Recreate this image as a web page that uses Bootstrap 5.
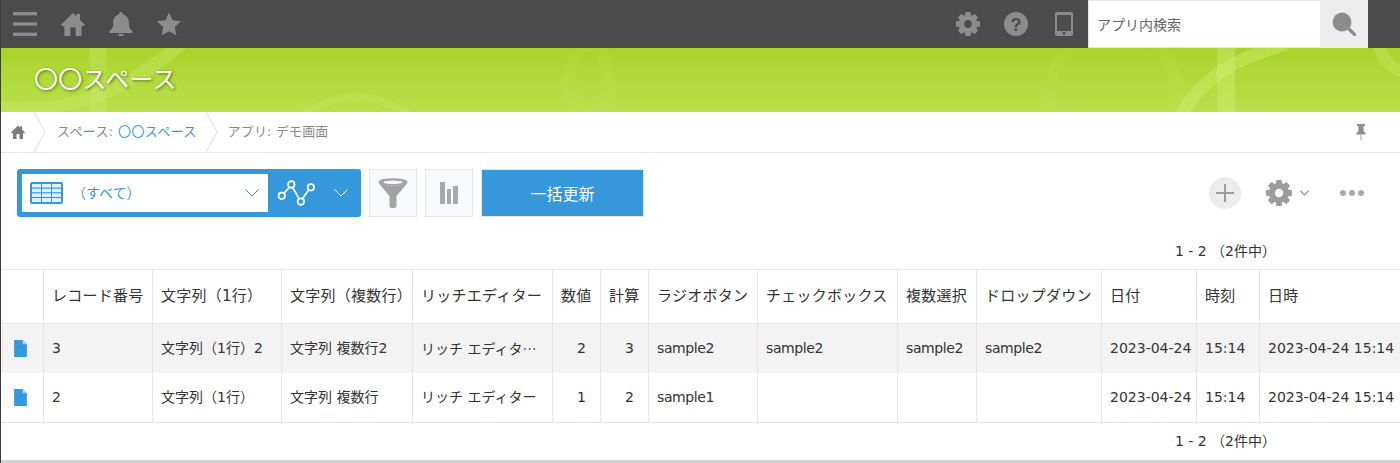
<!DOCTYPE html>
<html lang="ja">
<head>
<meta charset="utf-8">
<title>〇〇スペース</title>
<link href="https://cdn.jsdelivr.net/npm/bootstrap@5.3.0/dist/css/bootstrap.min.css" rel="stylesheet">
<style>
html,body{height:463px;overflow:hidden;background:#fff}
body{font-family:"DejaVu Sans","Noto Sans CJK JP",sans-serif;font-size:14px;color:#333;border-left:1px solid #3c3c3c}
.page-wrap{height:463px;display:flex;flex-direction:column}
.topbar{height:48px;background:#4b4b4b;padding-left:1px;margin-left:-1px;flex:none}
.topbar svg{fill:#8c8c8c;display:block}
.top-slot{width:48px;height:48px;display:flex;align-items:center;justify-content:center;flex:none}
.search-box{width:280px;height:48px;margin-right:32px;flex:none;flex-wrap:nowrap}
.search-box .form-control{height:48px;border-radius:0;border:1px solid #e3e7e8;padding:0 8px;font-size:14px;color:#666;box-shadow:none;font-family:"Noto Sans CJK JP",sans-serif}
.search-box .form-control::placeholder{color:#666;opacity:1}
.search-box .btn{width:48px;height:48px;border-radius:0;background:#ececec;border:0;padding:0;display:flex;align-items:center;justify-content:center}
.banner{height:64px;background:linear-gradient(180deg,#a9d42b 0%,#b8e04b 100%);flex:none;overflow:hidden}
.banner-art{left:0;top:0;width:1399px;height:64px}
.banner-title{font-family:"Noto Sans CJK JP",sans-serif;font-size:24px;font-weight:400;color:#fff;line-height:60px;margin:0;padding-left:33px;letter-spacing:.3px;text-shadow:1px 1px 3px rgba(60,70,0,.75)}
.crumbs{height:41px;border-bottom:1px solid #e3e7e8;font-size:13px;color:#888;flex:none}
.crumbs a{color:#3498db;text-decoration:none}
.crumbs span{letter-spacing:.35px}
.crumbs .crumb-app{letter-spacing:.15px}
.crumb-home{margin:0 9px 0 10px;fill:#7b7b7b}
.crumb-sep{margin-right:10px;flex:none}
.crumb-first{margin-left:1px;margin-right:9px}
.crumb-pin{margin-right:33px}
.tools{height:64px;padding:16px 36px 0 16px;flex:none}
.view-picker{width:344px;height:48px;background:#3498db;border-radius:3px;padding:5px;flex:none}
.view-field{width:246px;height:38px;background:#fff;color:#3498db;font-family:"Noto Sans CJK JP",sans-serif;padding:0 9px 0 8px}
.view-name{margin-left:9px;margin-top:-2px}
.line-glyph{margin-left:9px}
.tool-btn{width:48px;height:48px;background:#f7f9fa;border:1px solid #e3e7e8;border-radius:0;padding:0;display:flex;align-items:center;justify-content:center;flex:none}
.bulk-btn{width:163px;height:48px;background:#3498db;border:1px solid #e3e7e8;border-radius:0;color:#fff;font-size:16px;font-family:"Noto Sans CJK JP",sans-serif;margin-left:8px}
.bulk-btn:hover{background:#3498db;color:#fff}
.right-tools{height:48px}
.plus-circle{width:32px;height:32px;border-radius:50%;background:#ececec;display:flex;align-items:center;justify-content:center}
.gear-tool{margin-left:25px;color:#9c9c9c}
.gear-caret{margin-left:8px}
.more-dots{margin-left:31px}
.pager{height:52px;padding:16px 124px 0 0;font-size:14px;color:#333;flex:none}
.pager-foot{height:37px;padding-top:0}
.grid-table{table-layout:fixed;width:1399px;margin:0;border-collapse:separate;border-spacing:0;color:#333;--bs-table-bg:transparent}
.grid-table th,.grid-table td{padding:0 8px;border:0;border-right:1px solid #e3e7e8;white-space:nowrap;overflow:hidden;vertical-align:middle;font-weight:400;box-shadow:none}
.grid-table th:last-child,.grid-table td:last-child{border-right:0}
.grid-table thead th{height:55px;font-size:15px;letter-spacing:.25px;border-top:1px solid #e3e7e8;border-bottom:1px solid #e3e7e8}
.grid-table tbody tr:first-child td{height:49px;background:#f3f3f3}
.grid-table tbody tr:last-child td{height:50px;border-bottom:1px solid #e3e7e8}
.grid-table .num-cell{text-align:right;padding-right:14px}
.grid-table .sample-cell{letter-spacing:-.4px}
.cjk-run{font-family:"Noto Sans CJK JP",sans-serif}
.doc-icon{display:block;margin-left:5px;margin-top:-1px}
.foot-bar{height:4px;background:#d0d3d3;flex:none}
</style>
</head>
<body>
<svg width="0" height="0" class="position-absolute">
  <defs>
    <symbol id="gear" viewBox="-13 -13 26 26">
      <circle r="7.2" fill="none" stroke="currentColor" stroke-width="6"/>
      <g fill="currentColor">
        <rect x="-2.9" y="-13" width="5.8" height="6.5" rx=".8"/>
        <rect x="-2.9" y="-13" width="5.8" height="6.5" rx=".8" transform="rotate(45)"/>
        <rect x="-2.9" y="-13" width="5.8" height="6.5" rx=".8" transform="rotate(90)"/>
        <rect x="-2.9" y="-13" width="5.8" height="6.5" rx=".8" transform="rotate(135)"/>
        <rect x="-2.9" y="-13" width="5.8" height="6.5" rx=".8" transform="rotate(180)"/>
        <rect x="-2.9" y="-13" width="5.8" height="6.5" rx=".8" transform="rotate(225)"/>
        <rect x="-2.9" y="-13" width="5.8" height="6.5" rx=".8" transform="rotate(270)"/>
        <rect x="-2.9" y="-13" width="5.8" height="6.5" rx=".8" transform="rotate(315)"/>
      </g>
    </symbol>
    <symbol id="home" viewBox="0 0 24 24">
      <path d="M12 1 L15.5 4.4 V2 H19 V7.8 L24 12.8 L22.6 14 H20.6 V24 H14.6 V15.5 H9.4 V24 H3.4 V14 H1.4 L0 12.8 Z"/>
    </symbol>
    <symbol id="doc" viewBox="0 0 12 16">
      <path d="M0 0 H8 L12 4 V16 H0 Z" fill="#3498db"/>
      <path d="M8 0 L12 4 H8 Z" fill="#a9d2f0"/>
    </symbol>
  </defs>
</svg>
<div class="page-wrap">
  <nav class="topbar d-flex align-items-center">
    <div class="d-flex align-items-center">
      <div class="top-slot" aria-label="menu">
        <svg width="24" height="24" viewBox="0 0 24 24"><rect y="0" width="24" height="3.4"/><rect y="10.3" width="24" height="3.4"/><rect y="20.6" width="24" height="3.4"/></svg>
      </div>
      <div class="top-slot"><svg width="24" height="24"><use href="#home"/></svg></div>
      <div class="top-slot">
        <svg width="24" height="24" viewBox="0 0 24 24"><path d="M12 0 a2 2 0 0 1 2 2 v.6 c3.8 .9 5.8 4 5.8 8 c0 4.6 1 6.6 3.6 8.6 v1.8 H.6 v-1.8 c2.6 -2 3.6 -4 3.6 -8.6 c0 -4 2 -7.1 5.800 -8 V2 a2 2 0 0 1 2 -2z"/><path d="M9 22 h6 a3 2 0 0 1 -6 0z"/></svg>
      </div>
      <div class="top-slot">
        <svg width="24" height="24" viewBox="0 0 24 24"><path d="M12 .5 L15.6 8.2 L24 9.2 L17.8 15 L19.4 23.500 L12 19.3 L4.6 23.500 L6.2 15 L0 9.2 L8.4 8.2 Z"/></svg>
      </div>
    </div>
    <div class="d-flex align-items-center ms-auto">
      <div class="top-slot" style="color:#8c8c8c"><svg width="24" height="24"><use href="#gear"/></svg></div>
      <div class="top-slot">
        <svg width="24" height="24" viewBox="0 0 24 24"><circle cx="12" cy="12" r="12"/><text x="12" y="18.5" text-anchor="middle" font-family="Liberation Sans" font-weight="700" font-size="18" fill="#4b4b4b">?</text></svg>
      </div>
      <div class="top-slot">
        <svg width="18" height="24" viewBox="0 0 18 24"><path fill-rule="evenodd" d="M2 0 H16 a2 2 0 0 1 2 2 V22 a2 2 0 0 1 -2 2 H2 a2 2 0 0 1 -2 -2 V2 a2 2 0 0 1 2 -2z M2 3 V19 H16 V3z"/><circle cx="9" cy="21.4" r="1.3" fill="#4b4b4b"/></svg>
      </div>
      <div class="input-group search-box">
        <input class="form-control" type="text" placeholder="アプリ内検索">
        <button class="btn" type="button" aria-label="検索">
          <svg width="24" height="24" viewBox="0 0 24 24" fill="none" stroke="#8c8c8c"><circle cx="10" cy="10" r="8" stroke-width="2.8"/><path d="M15.8 15.8 L22.600 22.600" stroke-width="3.4" stroke-linecap="round"/></svg>
        </button>
      </div>
    </div>
  </nav>

  <header class="banner position-relative">
    <svg class="banner-art position-absolute" viewBox="0 0 1399 64" aria-hidden="true" fill="none">
      <g stroke="#d6f07a" stroke-opacity=".36">
        <path d="M-10 58 C60 70 125 45 190 -12" stroke-width="13" stroke-opacity=".26"/>
        <path d="M97 -5 V70" stroke-width="17" stroke-opacity=".26"/>
        <path d="M293 74 Q355 24 418 74" stroke-width="8" stroke-opacity=".2"/>
        <path d="M1178 70 C1200 30 1235 10 1285 -4" stroke-width="13"/>
        <path d="M1225 -5 V70" stroke-width="18"/>
        <path d="M1377 -6 Q1382 18 1402 24" stroke-width="12" stroke-opacity=".26"/>
      </g>
      <g stroke="#d6f07a" stroke-opacity=".08">
        <ellipse cx="588" cy="32" rx="19" ry="36" stroke-width="14"/>
        <ellipse cx="1113" cy="48" rx="64" ry="66" stroke-width="12"/>
      </g>
    </svg>
    <h1 class="banner-title position-relative">〇〇スペース</h1>
  </header>

  <div class="crumbs d-flex align-items-center">
    <svg class="crumb-home" width="14" height="14"><use href="#home"/></svg>
    <svg class="crumb-sep" width="12" height="40" viewBox="0 0 12 40" fill="none" stroke="#e3e7e8" stroke-width="1.3"><path d="M0 0 L11 20 L0 40"/></svg>
    <span class="crumb-first">スペース: <a href="#">〇〇スペース</a></span>
    <svg class="crumb-sep" width="12" height="40" viewBox="0 0 12 40" fill="none" stroke="#e3e7e8" stroke-width="1.3"><path d="M0 0 L11 20 L0 40"/></svg>
    <span class="crumb-app">アプリ: デモ画面</span>
    <svg class="crumb-pin ms-auto" width="12" height="17" viewBox="0 0 12 17"><path d="M2 0 H10 V2 H8.600 V7 L10.600 9.500 V10.500 H1.400 V9.500 L3.400 7 V2 H2 Z" fill="#8f8f8f"/><rect x="5.2" y="10.500" width="1.600" height="6" fill="#c4c4c4"/></svg>
  </div>

  <div class="tools d-flex align-items-start">
    <div class="view-picker d-flex align-items-center">
      <div class="view-field d-flex align-items-center">
        <svg width="33" height="22" viewBox="0 0 33 22"><rect width="33" height="22" rx="2" fill="#3498db"/><g fill="#e4f1fb"><rect x="2" y="2" width="9" height="3.500"/><rect x="12" y="2" width="9" height="3.500"/><rect x="22" y="2" width="9" height="3.500"/><rect x="2" y="6.700" width="9" height="3.500"/><rect x="12" y="6.700" width="9" height="3.500"/><rect x="22" y="6.700" width="9" height="3.500"/><rect x="2" y="11.400" width="9" height="3.500"/><rect x="12" y="11.400" width="9" height="3.500"/><rect x="22" y="11.400" width="9" height="3.500"/><rect x="2" y="16.100" width="9" height="3.900"/><rect x="12" y="16.100" width="9" height="3.900"/><rect x="22" y="16.100" width="9" height="3.900"/></g></svg>
        <span class="view-name">（すべて）</span>
        <svg class="ms-auto" width="14" height="8" viewBox="0 0 14 8" fill="none" stroke="#3498db" stroke-width="1"><path d="M.5 .5 L7 7 L13.500 .5"/></svg>
      </div>
      <svg class="line-glyph" width="42" height="30" viewBox="0 0 44 30" fill="none" stroke="#fff" stroke-width="1.800"><path d="M7.500 15 L13.500 8.500 M16.500 9.500 L22.500 20 M27 20.500 L33 12"/><circle cx="5" cy="18" r="3.400"/><circle cx="15" cy="6" r="3.400"/><circle cx="25" cy="24" r="3.400"/><circle cx="35.500" cy="9" r="3.400"/></svg>
      <svg class="ms-auto me-2" width="14" height="8" viewBox="0 0 14 8" fill="none" stroke="#fff" stroke-width="1"><path d="M.5 .5 L7 7 L13.500 .5"/></svg>
    </div>
    <button class="tool-btn ms-2" type="button" aria-label="絞り込み">
      <svg width="30" height="30" viewBox="0 0 30 30"><ellipse cx="15" cy="4" rx="14.500" ry="3.800" fill="#a3a3a3"/><ellipse cx="15" cy="4.200" rx="9.500" ry="1.800" fill="#f7f9fa"/><path d="M.5 5 L11.500 18 V28 a3.500 2 0 0 0 7 0 V18 L29.500 5 Q15 11 .5 5z" fill="#a3a3a3"/></svg>
    </button>
    <button class="tool-btn ms-2" type="button" aria-label="グラフ">
      <svg width="18" height="22" viewBox="0 0 18 22" fill="#a8a8a8"><rect x="0" y="0" width="5" height="22"/><rect x="7" y="7" width="4" height="15"/><rect x="13" y="4" width="5" height="18"/></svg>
    </button>
    <button class="btn bulk-btn" type="button">一括更新</button>
    <div class="right-tools ms-auto d-flex align-items-center">
      <div class="plus-circle"><svg width="18" height="18" viewBox="0 0 18 18" fill="#9c9c9c"><rect x="8" y="0" width="2" height="18"/><rect x="0" y="8" width="18" height="2"/></svg></div>
      <svg class="gear-tool" width="26" height="26"><use href="#gear"/></svg>
      <svg class="gear-caret" width="9" height="6" viewBox="0 0 9 6" fill="none" stroke="#9c9c9c" stroke-width="1.300"><path d="M.5 .8 L4.500 5 L8.500 .8"/></svg>
      <svg class="more-dots" width="24" height="6" viewBox="0 0 24 6" fill="#a8a8a8"><circle cx="3" cy="3" r="3"/><circle cx="12" cy="3" r="3"/><circle cx="21" cy="3" r="3"/></svg>
    </div>
  </div>

  <div class="pager d-flex align-items-center justify-content-end"><span>1 - 2 （2件中）</span></div>

  <table class="table grid-table">
    <colgroup>
      <col style="width:43px"><col style="width:109px"><col style="width:129px"><col style="width:131px"><col style="width:140px"><col style="width:48px"><col style="width:48px"><col style="width:109px"><col style="width:140px"><col style="width:79px"><col style="width:125px"><col style="width:95px"><col style="width:63px"><col>
    </colgroup>
    <thead>
      <tr><th></th><th>レコード番号</th><th>文字列（1行）</th><th>文字列（複数行）</th><th>リッチエディター</th><th>数値</th><th>計算</th><th>ラジオボタン</th><th>チェックボックス</th><th>複数選択</th><th>ドロップダウン</th><th>日付</th><th>時刻</th><th>日時</th></tr>
    </thead>
    <tbody>
      <tr><td><svg class="doc-icon" width="13" height="17"><use href="#doc"/></svg></td><td>3</td><td>文字列（1行）2</td><td>文字列 複数行2</td><td>リッチ エディタ<span class="cjk-run">…</span></td><td class="num-cell">2</td><td class="num-cell">3</td><td class="sample-cell">sample2</td><td class="sample-cell">sample2</td><td class="sample-cell">sample2</td><td class="sample-cell">sample2</td><td>2023-04-24</td><td>15:14</td><td>2023-04-24 15:14</td></tr>
      <tr><td><svg class="doc-icon" width="13" height="17"><use href="#doc"/></svg></td><td>2</td><td>文字列（1行）</td><td>文字列 複数行</td><td>リッチ エディター</td><td class="num-cell">1</td><td class="num-cell">2</td><td class="sample-cell">sample1</td><td></td><td></td><td></td><td>2023-04-24</td><td>15:14</td><td>2023-04-24 15:14</td></tr>
    </tbody>
  </table>

  <div class="pager pager-foot d-flex align-items-center justify-content-end"><span>1 - 2 （2件中）</span></div>
  <div class="foot-bar"></div>
</div>
</body>
</html>
